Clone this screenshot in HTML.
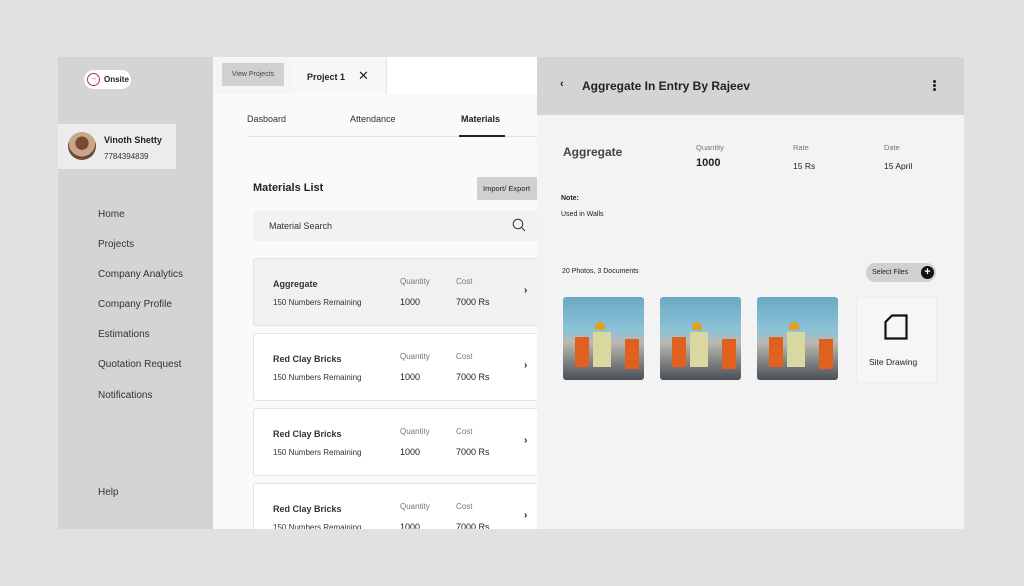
<!DOCTYPE html>
<html><head><meta charset="utf-8"><style>
*{margin:0;padding:0;box-sizing:border-box}
body{width:1024px;height:586px;background:#e1e1e1;font-family:"Liberation Sans",sans-serif;color:#222;position:relative;overflow:hidden}
.a{position:absolute}
.b{font-weight:bold}
.side{left:58px;top:57px;width:155px;height:472px;background:#d4d4d4}
.mid{left:213px;top:57px;width:324px;height:472px;background:#fafafa;overflow:hidden}
.right{left:537px;top:57px;width:427px;height:472px;background:#f3f3f3}
.nav{left:40px;font-size:10px;color:#333}
.card{left:40px;width:300px;height:68px;background:#fff;border:1px solid #e2e2e2;border-radius:3px}
.card .t{left:19px;top:20px;font-size:9px;font-weight:bold;color:#333}
.card .s{left:19px;top:39px;font-size:8px;color:#333}
.card .ql{left:146px;top:18px;font-size:8px;color:#777}
.card .qv{left:146px;top:38px;font-size:9px}
.card .cl{left:202px;top:18px;font-size:8px;color:#777}
.card .cv{left:202px;top:38px;font-size:9px}
.card .ar{left:270px;top:26px;font-size:10px;font-weight:bold}
.ph{top:240px;width:81px;height:83px;border-radius:3px;overflow:hidden;background:linear-gradient(#6aa9c2 0%,#8cc3d8 40%,#b9b9b0 55%,#4a4f58 100%)}
.ph i{position:absolute;display:block}
</style></head><body>
<div class="a side">
 <div class="a" style="left:26px;top:13px;width:47px;height:19px;background:#fff;border-radius:10px"></div>
 <div class="a" style="left:29px;top:16px;width:13px;height:13px;border:1.5px solid #b03060;border-radius:50%;font-size:7px;color:#b03060;text-align:center;line-height:10px">→</div>
 <div class="a b" style="left:46px;top:18px;font-size:8px">Onsite</div>
 <div class="a" style="left:0;top:67px;width:118px;height:45px;background:#ececec"></div>
 <div class="a" style="left:10px;top:75px;width:28px;height:28px;border-radius:50%;background:radial-gradient(circle at 50% 40%,#7a4a30 0 30%,#c9a58a 31% 60%,#6b4a33 61%)"></div>
 <div class="a b" style="left:46px;top:78px;font-size:9px">Vinoth Shetty</div>
 <div class="a" style="left:46px;top:95px;font-size:8px;color:#333">7784394839</div>
 <div class="a nav" style="top:152px">Home</div>
 <div class="a nav" style="top:182px">Projects</div>
 <div class="a nav" style="top:212px">Company Analytics</div>
 <div class="a nav" style="top:242px">Company Profile</div>
 <div class="a nav" style="top:272px">Estimations</div>
 <div class="a nav" style="top:302px">Quotation Request</div>
 <div class="a nav" style="top:333px">Notifications</div>
 <div class="a nav" style="top:430px">Help</div>
</div>
<div class="a mid">
 <div class="a" style="left:0;top:0;width:324px;height:37px;background:#fff"></div>
 <div class="a" style="left:0;top:0;width:80px;height:37px;background:#f5f5f5"></div>
 <div class="a" style="left:9px;top:6px;width:62px;height:23px;background:#d0d0d0;font-size:7px;color:#444;text-align:center;line-height:23px">View Projects</div>
 <div class="a" style="left:80px;top:0;width:94px;height:37px;background:#f7f7f7;border-right:1px solid #e4e4e4"></div>
 <div class="a b" style="left:94px;top:15px;font-size:9px">Project 1</div>
 <div class="a" style="left:145px;top:11px;font-size:13px">✕</div>
 <div class="a" style="left:34px;top:57px;font-size:9px;color:#333">Dasboard</div>
 <div class="a" style="left:137px;top:57px;font-size:9px;color:#333">Attendance</div>
 <div class="a b" style="left:248px;top:57px;font-size:9px">Materials</div>
 <div class="a" style="left:34px;top:79px;width:290px;height:1px;background:#e2e2e2"></div>
 <div class="a" style="left:246px;top:78px;width:46px;height:2px;background:#222"></div>
 <div class="a b" style="left:40px;top:125px;font-size:11px">Materials List</div>
 <div class="a" style="left:264px;top:120px;width:62px;height:23px;background:#d0d0d0;border-radius:2px;font-size:7.5px;line-height:23px;padding-left:6px;white-space:nowrap">Import/ Export</div>
 <div class="a" style="left:40px;top:154px;width:290px;height:30px;background:#f2f2f2"></div>
 <div class="a" style="left:56px;top:164px;font-size:9px;color:#333">Material Search</div>
 <svg class="a" style="left:299px;top:161px" width="14" height="14" viewBox="0 0 14 14"><circle cx="6" cy="6" r="4.8" fill="none" stroke="#333" stroke-width="1"/><line x1="9.5" y1="9.5" x2="13" y2="13" stroke="#333"/></svg>
 <div class="a card" style="top:201px;background:#f1f1f1"><div class="a t">Aggregate</div><div class="a s">150 Numbers Remaining</div><div class="a ql">Quantity</div><div class="a qv">1000</div><div class="a cl">Cost</div><div class="a cv">7000 Rs</div><div class="a ar">›</div></div>
 <div class="a card" style="top:276px"><div class="a t">Red Clay Bricks</div><div class="a s">150 Numbers Remaining</div><div class="a ql">Quantity</div><div class="a qv">1000</div><div class="a cl">Cost</div><div class="a cv">7000 Rs</div><div class="a ar">›</div></div>
 <div class="a card" style="top:351px"><div class="a t">Red Clay Bricks</div><div class="a s">150 Numbers Remaining</div><div class="a ql">Quantity</div><div class="a qv">1000</div><div class="a cl">Cost</div><div class="a cv">7000 Rs</div><div class="a ar">›</div></div>
 <div class="a card" style="top:426px"><div class="a t">Red Clay Bricks</div><div class="a s">150 Numbers Remaining</div><div class="a ql">Quantity</div><div class="a qv">1000</div><div class="a cl">Cost</div><div class="a cv">7000 Rs</div><div class="a ar">›</div></div>
</div>
<div class="a right">
 <div class="a" style="left:0;top:0;width:427px;height:58px;background:#d4d4d4"></div>
 <div class="a b" style="left:23px;top:21px;font-size:11px">‹</div>
 <div class="a b" style="left:45px;top:22px;font-size:12px">Aggregate In Entry By Rajeev</div>
 <div class="a" style="left:396px;top:23px;width:3px;height:3px;background:#222;border-radius:50%;box-shadow:0 4px 0 #222,0 8px 0 #222"></div>
 <div class="a b" style="left:26px;top:88px;font-size:12px;color:#444">Aggregate</div>
 <div class="a" style="left:159px;top:86px;font-size:7.5px;color:#777">Quantity</div>
 <div class="a b" style="left:159px;top:100px;font-size:11px">1000</div>
 <div class="a" style="left:256px;top:86px;font-size:7.5px;color:#777">Rate</div>
 <div class="a" style="left:256px;top:104px;font-size:8.5px">15 Rs</div>
 <div class="a" style="left:347px;top:86px;font-size:7.5px;color:#777">Date</div>
 <div class="a" style="left:347px;top:104px;font-size:8.5px">15 April</div>
 <div class="a b" style="left:24px;top:138px;font-size:7px">Note:</div>
 <div class="a" style="left:24px;top:154px;font-size:7px">Used in Walls</div>
 <div class="a" style="left:25px;top:211px;font-size:7px">20 Photos, 3 Documents</div>
 <div class="a" style="left:329px;top:206px;width:70px;height:19px;background:#d0d0d0;border-radius:10px;font-size:7px;line-height:19px;padding-left:6px">Select Files</div>
 <div class="a" style="left:384px;top:209px;width:13px;height:13px;border-radius:50%;background:#111;color:#fff;font-size:11px;line-height:12px;text-align:center;font-weight:bold">+</div>
 <div class="a ph" style="left:26px"><i style="left:12px;top:40px;width:14px;height:30px;background:#e06020"></i><i style="left:30px;top:35px;width:18px;height:35px;background:#d8d8a0"></i><i style="left:62px;top:42px;width:14px;height:30px;background:#e06020"></i><i style="left:32px;top:25px;width:10px;height:8px;background:#e0a020;border-radius:5px 5px 0 0"></i></div>
 <div class="a ph" style="left:123px"><i style="left:12px;top:40px;width:14px;height:30px;background:#e06020"></i><i style="left:30px;top:35px;width:18px;height:35px;background:#d8d8a0"></i><i style="left:62px;top:42px;width:14px;height:30px;background:#e06020"></i><i style="left:32px;top:25px;width:10px;height:8px;background:#e0a020;border-radius:5px 5px 0 0"></i></div>
 <div class="a ph" style="left:220px"><i style="left:12px;top:40px;width:14px;height:30px;background:#e06020"></i><i style="left:30px;top:35px;width:18px;height:35px;background:#d8d8a0"></i><i style="left:62px;top:42px;width:14px;height:30px;background:#e06020"></i><i style="left:32px;top:25px;width:10px;height:8px;background:#e0a020;border-radius:5px 5px 0 0"></i></div>
 <div class="a" style="left:319px;top:240px;width:81px;height:86px;background:#f6f6f6;border:1px solid #ececec;border-radius:3px"></div>
 <svg class="a" style="left:347px;top:257px" width="24" height="26" viewBox="0 0 24 26"><path d="M8 1.5H22.5V24.5H1.5V8Z" fill="none" stroke="#111" stroke-width="2.2"/></svg>
 <div class="a" style="left:332px;top:300px;font-size:8.5px">Site Drawing</div>
</div>
</body></html>
